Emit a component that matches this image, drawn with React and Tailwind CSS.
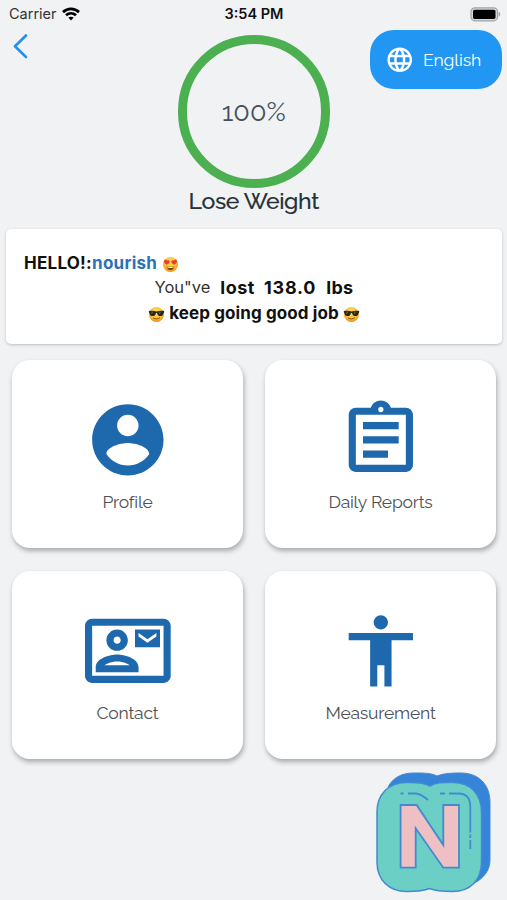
const PATHS = {
  globe:
    "M11.99 2C6.47 2 2 6.48 2 12s4.47 10 9.99 10C17.52 22 22 17.52 22 12S17.52 2 11.99 2zm6.93 6h-2.95c-.32-1.25-.78-2.45-1.38-3.56 1.84.63 3.37 1.91 4.33 3.56zM12 4.04c.83 1.2 1.48 2.53 1.91 3.96h-3.82c.43-1.43 1.08-2.76 1.91-3.96zM4.26 14C4.1 13.36 4 12.69 4 12s.1-1.36.26-2h3.38c-.08.66-.14 1.32-.14 2s.06 1.34.14 2H4.26zm.82 2h2.95c.32 1.25.78 2.45 1.38 3.56-1.84-.63-3.37-1.9-4.33-3.56zm2.95-8H5.08c.96-1.66 2.49-2.93 4.33-3.56C8.81 5.55 8.35 6.75 8.03 8zM12 19.96c-.83-1.2-1.48-2.53-1.91-3.96h3.82c-.43 1.43-1.08 2.76-1.91 3.96zM14.34 14H9.66c-.09-.66-.16-1.32-.16-2s.07-1.35.16-2h4.68c.09.65.16 1.32.16 2s-.07 1.34-.16 2zm.25 5.56c.6-1.11 1.06-2.31 1.38-3.56h2.95c-.96 1.65-2.49 2.93-4.33 3.56zM16.36 14c.08-.66.14-1.32.14-2s-.06-1.34-.14-2h3.38c.16.64.26 1.31.26 2s-.1 1.36-.26 2h-3.38z",
  profile:
    "M12 2C6.48 2 2 6.48 2 12s4.48 10 10 10 10-4.48 10-10S17.52 2 12 2zm0 3c1.66 0 3 1.34 3 3s-1.34 3-3 3-3-1.34-3-3 1.34-3 3-3zm0 14.2c-2.5 0-4.71-1.28-6-3.22.03-1.99 4-3.08 6-3.08 1.99 0 5.97 1.09 6 3.08-1.29 1.94-3.5 3.22-6 3.22z",
  reports:
    "M7 15h7v2H7zm0-4h10v2H7zm0-4h10v2H7zm12-4h-4.18C14.4 1.84 13.3 1 12 1c-1.3 0-2.4.84-2.82 2H5c-1.1 0-2 .9-2 2v14c0 1.1.9 2 2 2h14c1.1 0 2-.9 2-2V5c0-1.1-.9-2-2-2zm-7-.25c.41 0 .75.34.75.75s-.34.75-.75.75-.75-.34-.75-.75.34-.75.75-.75zM19 19H5V5h14v14z",
  contact:
    "M22 3H2C.9 3 0 3.9 0 5v14c0 1.1.9 2 2 2h20c1.1 0 2-.9 2-2V5c0-1.1-.9-2-2-2zm0 16H2V5h20v14zM21 6h-7v5h7V6zm-1 2l-2.5 1.75L15 8V7l2.5 1.75L20 7v1zM9 12c1.65 0 3-1.35 3-3s-1.35-3-3-3-3 1.35-3 3 1.35 3 3 3zm0-4c.55 0 1 .45 1 1s-.45 1-1 1-1-.45-1-1 .45-1 1-1zM15 16.59c0-2.5-3.97-3.58-6-3.58s-6 1.08-6 3.58V18h12v-1.41zM5.48 16c.74-.51 2.23-1 3.52-1 1.3 0 2.78.49 3.52 1H5.48z",
  measurement:
    "M12 2c1.1 0 2 .9 2 2s-.9 2-2 2-2-.9-2-2 .9-2 2-2zm9 7h-6v13h-2v-6h-2v6H9V9H3V7h18v2z",
};

function Icon({ name, className }) {
  return (
    <svg viewBox="0 0 24 24" fill="currentColor" fillRule="evenodd" overflow="visible" className={className}>
      <path d={PATHS[name]} />
    </svg>
  );
}

function FaceGradient({ id }) {
  return (
    <radialGradient id={id} cx="50%" cy="35%" r="65%">
      <stop offset="0" stopColor="#ffe15a" />
      <stop offset="0.65" stopColor="#fbc02f" />
      <stop offset="1" stopColor="#ee8a1c" />
    </radialGradient>
  );
}

function HeartEyes() {
  return (
    <svg viewBox="0 0 18 18" className="h-[17px] w-[17px] shrink-0">
      <defs><FaceGradient id="face-heart" /></defs>
      <circle cx="9" cy="9" r="8" fill="url(#face-heart)" />
      <path d="M5.2 9.2C2.6 7.8 1.4 6 2.4 4.5c.8-1.1 2.3-.8 2.9.4 1-.9 2.5-.6 2.8.7.3 1.5-1 2.8-2.9 3.6zM12.8 9.2c2.6-1.4 3.8-3.2 2.8-4.7-.8-1.1-2.3-.8-2.9.4-1-.9-2.5-.6-2.8.7-.3 1.5 1 2.8 2.9 3.6z" fill="#ee3b35" />
      <path d="M4.8 10.9c2.6.8 5.8.8 8.4 0-.3 2.5-2 4-4.2 4s-3.9-1.5-4.2-4z" fill="#7a3a10" />
      <path d="M5.3 11.3c2.3.6 5.1.6 7.4 0l-.3 1c-2.2.4-4.6.4-6.8 0z" fill="#fff" />
    </svg>
  );
}

function Sunglasses({ id }) {
  return (
    <svg viewBox="0 0 18 18" className="h-[17px] w-[17px] shrink-0">
      <defs><FaceGradient id={id} /></defs>
      <circle cx="9" cy="9" r="8" fill={`url(#${id})`} />
      <path d="M.9 5.3C3.5 4.7 6.5 4.9 9 5.7c2.5-.8 5.5-1 8.1-.4v1.5c-.6.3-.7.8-.9 1.6-.5 1.7-1.6 2.3-3.3 2.3-2 0-2.8-1.2-3.2-3-.2-.7-1.2-.7-1.4 0-.4 1.8-1.2 3-3.2 3-1.7 0-2.8-.6-3.3-2.3C1.6 7.6 1.5 7.1.9 6.8z" fill="#29251f" />
      <path d="M3 6.5l2-.1-1.5 2.4M11.2 6.5l2-.1-1.5 2.2" stroke="#77736b" strokeWidth=".7" fill="none" />
      <path d="M5.7 12.8c2.1 1.3 4.7 1.2 6.6-.3" stroke="#85450f" strokeWidth="1" strokeLinecap="round" fill="none" />
    </svg>
  );
}

function StatusBar() {
  return (
    <div className="grid h-[28px] grid-cols-3 items-center pl-[9px] pr-[6px] font-[Inter,sans-serif] text-[14.5px] leading-none text-[#111]">
      <div className="flex items-center gap-[5px]">
        <span className="text-[#333]">Carrier</span>
        <svg viewBox="0 0 18 14" className="h-[14px] w-[18px]" fill="none" stroke="#000" strokeWidth="2.8">
          <path d="M1 5.1C5.6.9 12.4.9 17 5.1M4 8.3c2.9-2.6 7.1-2.6 10 0" />
          <path d="M6.3 10.6c1.6-1.3 3.8-1.3 5.4 0L9 13.4z" fill="#000" stroke="none" />
        </svg>
      </div>
      <div className="-ml-[2px] text-center font-semibold">3:54 PM</div>
      <svg viewBox="0 0 31 15" className="h-[15px] w-[31px] justify-self-end">
        <rect x="1" y=".8" width="26.5" height="13" rx="3.8" fill="#d7d7d8" stroke="#a4a4a5" strokeWidth="1.2" />
        <rect x="3" y="2.7" width="22.5" height="9.2" rx="1.6" fill="#000" />
        <path d="M28.6 4.8c2.2.8 2.2 4.2 0 5z" fill="#a4a4a5" />
      </svg>
    </div>
  );
}

function Header() {
  return (
    <header className="grid h-[201px] grid-cols-[177.5px_152.5px_1fr]">
      <svg viewBox="0 0 16 26" className="ml-[12px] mt-[5px] h-[26px] w-[16px]" fill="none" stroke="#2490ee" strokeWidth="2.6" strokeLinecap="round" strokeLinejoin="round">
        <path d="M14 2.5 3 13.3 14 24" />
      </svg>
      <div className="flex flex-col items-center pt-[7px] text-[#263238]">
        <div className="flex h-[153px] w-[152.5px] shrink-0 items-center justify-center rounded-full border-[9px] border-[#4caf50] pt-[2px] font-[Raleway,Lato,sans-serif] text-[27px] text-[#455158]">
          100%
        </div>
        <h1 className="whitespace-nowrap font-[Raleway,Lato,sans-serif] text-[23px] font-medium leading-[26px] tracking-[-0.35px] [-webkit-text-stroke:0.15px_#263238]">Lose Weight</h1>
      </div>
      <button className="mr-[5px] mt-[2px] flex h-[59px] w-[132px] items-center gap-[9px] justify-self-end rounded-[24px] bg-[#2196f3] pl-[14.5px] text-white">
        <Icon name="globe" className="h-[29.5px] w-[29.5px]" />
        <span className="pt-px font-[Raleway,Lato,sans-serif] text-[17.5px] tracking-[-0.1px]">English</span>
      </button>
    </header>
  );
}

function Greeting() {
  return (
    <section className="ml-[6px] mr-[5px] h-[115px] rounded-[5px] bg-white pt-[23px] font-[Inter,sans-serif] text-[17px] text-[#111] shadow-[0_1px_3px_rgba(0,0,0,0.22)]">
      <div className="flex h-[24px] items-center pl-[18px] font-bold tracking-[0.25px]">
        <span>HELLO!:</span>
        <span className="mr-[5px] text-[#2a73b8]">nourish</span>
        <HeartEyes />
      </div>
      <div className="flex h-[22px] items-center justify-center">
        <span className="mr-[10px] text-[16.5px] text-[#333]">You"ve</span>
        <span className="mr-[9px] text-[18px] font-bold tracking-[0.5px]">lost</span>
        <span className="mr-[10px] text-[18px] font-bold tracking-[0.8px]">138.0</span>
        <span className="text-[18px] font-bold tracking-[0.3px]">lbs</span>
      </div>
      <div className="flex h-[32px] items-center justify-center gap-[4px] font-bold tracking-[0.1px]">
        <Sunglasses id="face-cool-left" />
        <span>keep going good job</span>
        <Sunglasses id="face-cool-right" />
      </div>
    </section>
  );
}

function Tile({ icon, label }) {
  return (
    <button className="flex h-[188px] flex-col items-center rounded-[18px] bg-white pt-[37px] shadow-[1px_3px_5px_rgba(0,0,0,0.3)]">
      <Icon name={icon} className="h-[85.7px] w-[85.7px] text-[#1e69ae]" />
      <span className="mt-[8px] font-[Raleway,Lato,sans-serif] text-[17.5px] leading-[22px] tracking-[-0.2px] text-[#4d5256]">{label}</span>
    </button>
  );
}

function Logo() {
  return (
    <svg viewBox="0 0 116 122" className="h-[122px] w-[116px]">
      <path d="M12 15C18 4 28 .8 39 1c9 0 16 0 22 3 8-3 16-3 24-3 18 0 29 12 29 29v57c0 10-4 16-12 22L82 119z" fill="#3584d8" stroke="#438bd0" />
      <path d="M1 40C1 22 13 10.5 30 10.5c9 0 17-.5 24 3.5 7-4 14-3.5 23-3.5 18 0 28.5 12 28.5 29.5v50c0 18-11 29.5-29 29.5-9 0-16 0-23-3-7 3-14 3-23 3C13 119.5 1 108 1 90z" fill="#6ccfc5" stroke="#438bd0" strokeWidth="1.5" />
      <path d="M24.6 33h16L67.3 73V33H83v62.7H67.3L39.7 56.3v39.4H24.6z" fill="#eec0c4" stroke="#438bd0" strokeWidth="1.8" />
      <path d="M24.5 21.5h3M32 21.5h8q6 1 12 6.5M64 21.5h5M73 21.5h9q12.3 0 12.3 13v26M94.3 62.5v3.5M94.3 68v9" fill="none" stroke="#438bd0" strokeWidth="1.8" />
    </svg>
  );
}

export default function App() {
  return (
    <main className="flex h-[900px] w-[507px] flex-col overflow-hidden bg-[#f0f2f4]">
      <StatusBar />
      <Header />
      <Greeting />
      <div className="mt-[16px] grid grid-cols-[231px_231px] gap-x-[22px] gap-y-[23px] pl-[12px]">
        <Tile icon="profile" label="Profile" />
        <Tile icon="reports" label="Daily Reports" />
        <Tile icon="contact" label="Contact" />
        <Tile icon="measurement" label="Measurement" />
      </div>
      <div className="mr-[15px] mt-[13px] self-end">
        <Logo />
      </div>
    </main>
  );
}
